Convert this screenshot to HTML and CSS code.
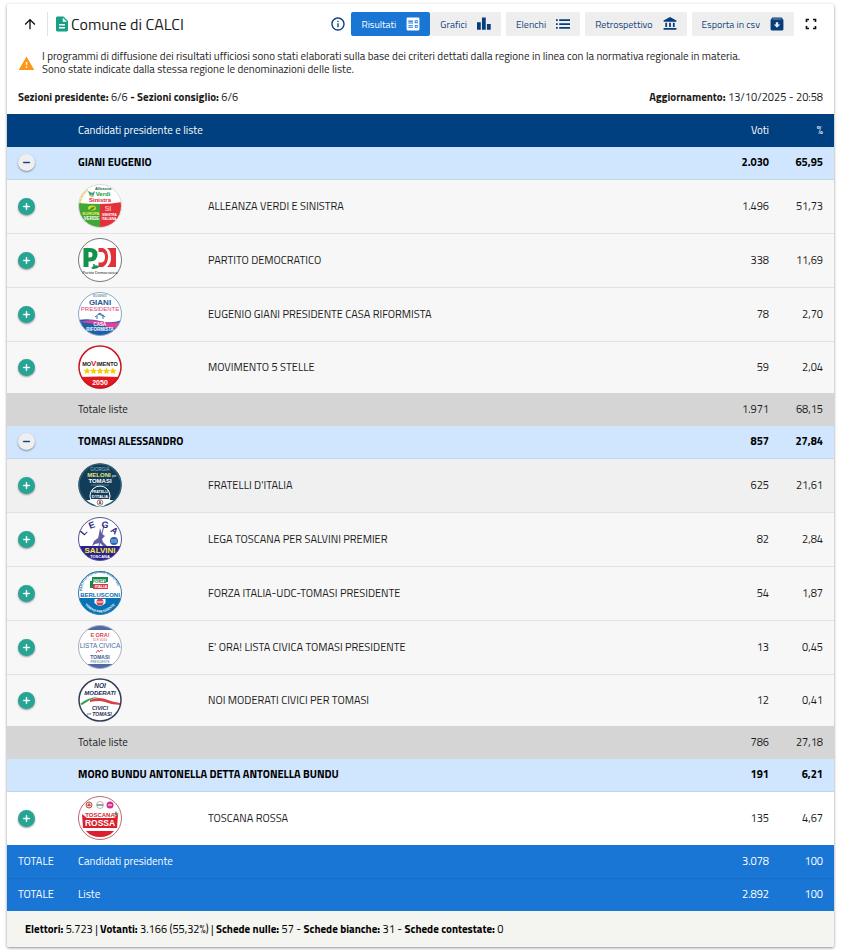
FILE: index.html
```html
<!DOCTYPE html>
<html lang="it">
<head>
<meta charset="utf-8">
<meta name="viewport" content="width=device-width, initial-scale=1">
<title>Comune di CALCI</title>
<link rel="stylesheet" href="styles.css">
</head>
<body>
<svg class="defs" aria-hidden="true">
  <symbol id="plus" viewBox="0 0 24 24"><path d="M19 13h-6v6h-2v-6H5v-2h6V5h2v6h6z"/></symbol>
  <symbol id="minus" viewBox="0 0 24 24"><path d="M19 13H5v-2h14z"/></symbol>
</svg>
<main class="card">
  <header class="toolbar">
    <button class="icon-btn up" aria-label="Livello superiore"><svg viewBox="0 0 24 24"><path d="M4 12l1.41 1.41L11 7.83V20h2V7.83l5.58 5.59L20 12l-8-8z"/></svg></button>
    <h1 class="title"><svg viewBox="0 0 24 24"><path d="M14 2H6c-1.100 0-2 .9-2 2v16c0 1.100.9 2 2 2h12c1.100 0 2-.9 2-2V8zm2 16H8v-2h8zm0-4H8v-2h8zm-3-5V3.500L18.500 9z"/></svg><span>Comune di CALCI</span></h1>
    <nav class="actions">
      <button class="icon-btn info" aria-label="Informazioni"><svg viewBox="0 0 24 24"><path d="M11 7h2v2h-2zm0 4h2v6h-2zm1-9C6.480 2 2 6.480 2 12s4.480 10 10 10 10-4.480 10-10S17.520 2 12 2zm0 18c-4.410 0-8-3.590-8-8s3.590-8 8-8 8 3.590 8 8-3.590 8-8 8z"/></svg></button>
      <div class="pair">
        <button class="btn active">Risultati <svg viewBox="0 0 24 24"><path fill-rule="evenodd" d="M3 1h18a2 2 0 0 1 2 2v18a2 2 0 0 1-2 2H3a2 2 0 0 1-2-2V3a2 2 0 0 1 2-2zM4 6v2h8V6zm0 3.500v1.500h8V9.500zM4 14v2h8v-2zm0 3.500V19h8v-1.500zM15 5.500v5h5v-5zm0 8v5h5v-5zM16.500 7h2v2h-2zm0 8h2v2h-2z"/></svg></button>
        <button class="btn">Grafici <svg viewBox="0 0 24 24"><path d="M0 9h6.500v13H0zM8.500 1H15v21H8.500zM17 12h6.500v10H17z"/></svg></button>
      </div>
      <button class="btn">Elenchi <svg viewBox="0 0 24 24"><path d="M0 4h3v3H0zm0 6.500h3v3H0zM0 17h3v3H0zM5.500 4H24v3H5.500zm0 6.500H24v3H5.500zm0 6.500H24v3H5.500z"/></svg></button>
      <button class="btn">Retrospettivo <svg viewBox="0 0 24 24"><path d="M4 10v7h3v-7zm6.500 0v7h3v-7zM1 22h22v-3H1zm16-12v7h3v-7zM12 0L1 6v2h22V6z"/></svg></button>
      <button class="btn">Esporta in csv <svg viewBox="0 0 24 24"><path fill-rule="evenodd" d="M4 1h16l3 4v16a2 2 0 0 1-2 2H3a2 2 0 0 1-2-2V5zM4 4h16l-1-1H5zM10 9v4H6.500l5.500 5.500 5.500-5.500H14V9z"/></svg></button>
      <button class="icon-btn full" aria-label="Schermo intero"><svg viewBox="0 0 24 24"><path d="M4 15h2.500v2.500H9V20H4zM4 4h5v2.500H6.500V9H4zm13.500 13.500V15H20v5h-5v-2.500zM15 4h5v5h-2.500V6.500H15z"/></svg></button>
    </nav>
  </header>

  <section class="notice">
    <svg viewBox="0 0 24 24"><path d="M1 21h22L12 2zm12-3h-2v-2h2zm0-4h-2v-4h2z"/></svg>
    <p>I programmi di diffusione dei risultati ufficiosi sono stati elaborati sulla base dei criteri dettati dalla regione in linea con la normativa regionale in materia.<br>Sono state indicate dalla stessa regione le denominazioni delle liste.</p>
  </section>

  <section class="status">
    <span><b>Sezioni presidente:</b> 6/6 <b>- Sezioni consiglio:</b> 6/6</span>
    <span><b>Aggiornamento:</b> 13/10/2025 - 20:58</span>
  </section>

  <table class="results">
    <colgroup><col class="c-toggle"><col class="c-logo"><col><col class="c-votes"><col class="c-pct"></colgroup>
    <thead>
      <tr><th></th><th colspan="2">Candidati presidente e liste</th><th class="num">Voti</th><th class="num">%</th></tr>
    </thead>
    <tbody>
      <tr class="candidate"><td><button class="toggle open" aria-label="Chiudi"><svg><use href="#minus"/></svg></button></td><td colspan="2">GIANI EUGENIO</td><td class="num">2.030</td><td class="num">65,95</td></tr>
      <tr class="party">
        <td><button class="toggle" aria-label="Apri"><svg><use href="#plus"/></svg></button></td>
        <td><svg class="logo" viewBox="0 0 44 44">
          <clipPath id="round"><circle cx="22" cy="22" r="21.500"/></clipPath>
          <g clip-path="url(#round)"><rect width="44" height="44" fill="#fff"/><path d="M0 19q10 1 22 1v24H0z" fill="#43a737"/><path d="M22 20q12 0 22-2v26H22z" fill="#e4303a"/></g>
          <circle cx="22" cy="22" r="21.500" fill="none" stroke="#d9dcd9"/>
          <path d="M2 19Q4 10 10 6" fill="none" stroke="#f5b335" stroke-width="1.500" stroke-dasharray="1 .6"/>
          <path d="M10 7l4 2 3-2-2 6-3-1z" fill="#2d9b9b"/><path d="M11 12l3-2 1 3z" fill="#f4c522"/>
          <text x="25" y="6" font-size="4" class="mark" fill="#176b3d">Alleanza</text>
          <text x="25" y="12" font-size="6" class="mark" fill="#129548">Verdi</text>
          <text x="22" y="18" font-size="6" class="mark" fill="#df252e">Sinistra</text>
          <ellipse cx="14" cy="24" rx="4" ry="2.500" fill="#d4df27"/><path d="M11 26q3-4 6-3-2 4-6 3" fill="#489535"/>
          <text x="13" y="31" font-size="4" class="mark" fill="#f6eb62">EUROPA</text><text x="13.500" y="36" font-size="4.500" class="mark" fill="#fff">VERDE</text>
          <text x="30" y="27" font-size="7" class="mark" fill="#ffb9b7">SI</text><text x="31.500" y="31.500" font-size="3.200" class="mark" fill="#fff">SINISTRA</text><text x="31" y="35.500" font-size="3.200" class="mark" fill="#fff">ITALIANA</text>
        </svg></td>
        <td>ALLEANZA VERDI E SINISTRA</td><td class="num">1.496</td><td class="num">51,73</td>
      </tr>
      <tr class="party">
        <td><button class="toggle" aria-label="Apri"><svg><use href="#plus"/></svg></button></td>
        <td><svg class="logo" viewBox="0 0 44 44">
          <circle cx="22" cy="22" r="21.500" fill="#fff" stroke="#777"/>
          <path fill-rule="evenodd" d="M5.500 10H12q7.500 0 7.500 6.500T12 23.500h-1.500V29h-5zm5 4v5.500H12q2.500 0 2.500-3T12 14z" fill="#12924a"/>
          <path fill-rule="evenodd" d="M20.500 10H25q5 2 5 9t-5 10h-4.500v-4.500H24q3-1 3-5.500t-3-5h-3.500z" fill="#e33138"/><path d="M29 10h9v19h-9q4-3 4-9.500T29 10z" fill="#e33138"/>
          <path d="M13 30q4-4 7-2 2-2 1 1-2 2-6 2z" fill="#12924a"/><circle cx="16" cy="27" r="1" fill="#12924a"/>
          <text x="22" y="36" font-size="4" text-anchor="middle" fill="#222">Partito Democratico</text>
        </svg></td>
        <td>PARTITO DEMOCRATICO</td><td class="num">338</td><td class="num">11,69</td>
      </tr>
      <tr class="party">
        <td><button class="toggle" aria-label="Apri"><svg><use href="#plus"/></svg></button></td>
        <td><svg class="logo" viewBox="0 0 44 44">
          <g clip-path="url(#round)"><rect width="44" height="44" fill="#fff"/><path d="M0 28q11-2 22 1t22-1v16H0z" fill="#1f5fa8"/><path d="M2 30q9-3 19-1 12 3 22 1-2 7-10 6-10-4-31-6z" fill="#e0419b"/></g>
          <circle cx="22" cy="22" r="21.500" fill="none" stroke="#87a9cb"/>
          <text x="22" y="5" font-size="3" class="mark" fill="#7896a8">EUGENIO</text>
          <text x="22" y="12.500" font-size="8" class="mark" fill="#215a91">GIANI</text>
          <text x="22" y="19" font-size="6" text-anchor="middle" fill="#dc3f80">PRESIDENTE</text>
          <path d="M17 25l5-4 5 4M19 24v3m6-3v3M20 22l6 2" fill="none" stroke="#3374b5"/>
          <text x="22" y="33.500" font-size="4.500" class="mark" fill="#fff">CASA</text><text x="22" y="38.500" font-size="4.500" class="mark" fill="#fff">RIFORMISTA</text>
        </svg></td>
        <td>EUGENIO GIANI PRESIDENTE CASA RIFORMISTA</td><td class="num">78</td><td class="num">2,70</td>
      </tr>
      <tr class="party closing">
        <td><button class="toggle" aria-label="Apri"><svg><use href="#plus"/></svg></button></td>
        <td><svg class="logo" viewBox="0 0 44 44">
          <g clip-path="url(#round)"><rect width="44" height="44" fill="#fff"/><path d="M0 32q22-1 44 0v12H0z" fill="#e11923"/></g>
          <circle cx="22" cy="22" r="21" fill="none" stroke="#c9151f" stroke-width="1.500"/>
          <text x="22" y="20.500" font-size="5.500" class="mark" fill="#161616">MO<tspan fill="#e11923" font-size="8">V</tspan>IMENTO</text>
          <path id="star" d="M9 22.500l1 2.300 2.500.2-1.900 1.600.6 2.400L9 27.700 6.800 29l.6-2.400L5.500 25l2.500-.2z" fill="#f8c900"/><use href="#star" x="6.500"/><use href="#star" x="13"/><use href="#star" x="19.500"/><use href="#star" x="26"/>
          <text x="22" y="40" font-size="7" class="mark" fill="#fff">2050</text>
        </svg></td>
        <td>MOVIMENTO 5 STELLE</td><td class="num">59</td><td class="num">2,04</td>
      </tr>
      <tr class="subtotal"><td></td><td colspan="2">Totale liste</td><td class="num">1.971</td><td class="num">68,15</td></tr>

      <tr class="candidate"><td><button class="toggle open" aria-label="Chiudi"><svg><use href="#minus"/></svg></button></td><td colspan="2">TOMASI ALESSANDRO</td><td class="num">857</td><td class="num">27,84</td></tr>
      <tr class="party hover">
        <td><button class="toggle" aria-label="Apri"><svg><use href="#plus"/></svg></button></td>
        <td><svg class="logo" viewBox="0 0 44 44">
          <g clip-path="url(#round)"><rect width="44" height="44" fill="#123c58"/><path d="M0 37h44v7H0z" fill="#fff"/></g>
          <circle cx="22" cy="22" r="21" fill="none" stroke="#315f78" stroke-width="1.500"/>
          <text x="22" y="8" font-size="4.500" text-anchor="middle" fill="#8dc3ca">GIORGIA</text>
          <text x="21" y="14" font-size="6" class="mark" fill="#ede77b">MELONI</text><text x="34" y="14" font-size="3" fill="#fff">per</text>
          <text x="22" y="20" font-size="6" class="mark" fill="#fff">TOMASI</text>
          <path d="M13 22h18" stroke="#678da0" stroke-width=".8"/>
          <circle cx="22" cy="33" r="10" fill="#123c58" stroke="#fff"/><path d="M12.500 36h19q-2 7-9.500 7.500-7.500-.5-9.500-7.500" fill="#fff"/>
          <text x="22" y="29.500" font-size="3.500" class="mark" fill="#fff">FRATELLI</text><text x="22" y="34.500" font-size="4" class="mark" fill="#fff">D'ITALIA</text>
          <circle cx="22" cy="39.500" r="2.800" fill="#fff" stroke="#567" stroke-width=".8"/><path d="M20.500 41q1-4 1.500-4t1.500 4z" fill="#c94d38"/>
        </svg></td>
        <td>FRATELLI D'ITALIA</td><td class="num">625</td><td class="num">21,61</td>
      </tr>
      <tr class="party">
        <td><button class="toggle" aria-label="Apri"><svg><use href="#plus"/></svg></button></td>
        <td><svg class="logo" viewBox="0 0 44 44">
          <g clip-path="url(#round)"><rect width="44" height="44" fill="#fff"/><path d="M0 29h44v15H0z" fill="#29248b"/></g>
          <circle cx="22" cy="22" r="21.500" fill="none" stroke="#56539a"/>
          <path d="M22 11l2 6 3 2-3 3 1 3 4 4h-4l-3-3-5 1-3 2 2-5 4-3 1-4z" fill="#6460a6"/><path d="M26 8l-5 21" stroke="#5d569f"/>
          <g font-size="9" class="bold" fill="#27257d"><text transform="translate(6 19) rotate(-48)">L</text><text transform="translate(12 12) rotate(-20)">E</text><text transform="translate(23 10) rotate(12)">G</text><text transform="translate(32 14) rotate(38)">A</text></g>
          <circle cx="36" cy="24" r="4" fill="#2360ad"/><path d="M33 23h6m-6 2h6" stroke="#dceaff" stroke-width=".7"/>
          <text x="22" y="36" font-size="8" class="mark" fill="#ffed37">SALVINI</text><text x="22" y="41" font-size="4" class="mark" fill="#fff">TOSCANA</text>
        </svg></td>
        <td>LEGA TOSCANA PER SALVINI PREMIER</td><td class="num">82</td><td class="num">2,84</td>
      </tr>
      <tr class="party">
        <td><button class="toggle" aria-label="Apri"><svg><use href="#plus"/></svg></button></td>
        <td><svg class="logo" viewBox="0 0 44 44">
          <g clip-path="url(#round)"><rect width="44" height="44" fill="#fff"/><path d="M0 27h44v17H0z" fill="#0872b5"/></g>
          <circle cx="22" cy="22" r="21.500" fill="none" stroke="#2c7daf"/>
          <path id="forza-top" d="M4 20A18 18 0 0 1 40 20" fill="none"/><text font-size="3.300" fill="#156e9f" class="bold"><textPath href="#forza-top">PARTITO POPOLARE EUROPEO</textPath></text>
          <path d="M14 6h16v5H14zM12 10h7v7h-7z" fill="#168b48"/><path d="M15 13h15v5H15z" fill="#d93843"/><path d="M15 8.500h13V13H15z" fill="#fff"/>
          <text x="21.500" y="12.200" font-size="4" class="mark" fill="#18804d">FORZA</text><text x="23" y="17" font-size="4" class="mark" fill="#fff">ITALIA</text>
          <text x="22" y="25.500" font-size="6" class="mark" fill="#086eaf">BERLUSCONI</text>
          <path d="M16.500 28h11v4q-5.500 6-11 0z" fill="#fff"/><circle cx="22" cy="31" r="3.500" fill="#d94252"/><path d="M19 31h6" stroke="#fff"/>
          <path id="forza-bottom" d="M4 31Q22 52 40 31" fill="none"/><text font-size="3.300" fill="#fff" class="bold"><textPath href="#forza-bottom" startOffset="4">TOMASI PRESIDENTE</textPath></text>
        </svg></td>
        <td>FORZA ITALIA-UDC-TOMASI PRESIDENTE</td><td class="num">54</td><td class="num">1,87</td>
      </tr>
      <tr class="party">
        <td><button class="toggle" aria-label="Apri"><svg><use href="#plus"/></svg></button></td>
        <td><svg class="logo" viewBox="0 0 44 44">
          <g clip-path="url(#round)"><rect width="44" height="44" fill="#fff"/><path d="M0 0h44v5H0zM0 39h44v5H0z" fill="#4d69a6"/></g>
          <circle cx="22" cy="22" r="21.500" fill="none" stroke="#a6b0bf"/>
          <text x="22" y="11.500" font-size="5.500" class="mark" fill="#d8434f">E ORA!</text><text x="22" y="15.500" font-size="3" text-anchor="middle" fill="#d8434f">11 E 15/10</text>
          <text x="22" y="23" font-size="6.500" text-anchor="middle" fill="#496ba0">LISTA CIVICA</text>
          <path d="M18 28l2-3 1 2 2-2 2 1" fill="none" stroke="#d8434f" stroke-width=".8"/>
          <text x="22" y="34" font-size="5" class="mark" fill="#365c91">TOMASI</text><text x="22" y="38" font-size="3" text-anchor="middle" fill="#5679ab">PRESIDENTE</text>
        </svg></td>
        <td>E' ORA! LISTA CIVICA TOMASI PRESIDENTE</td><td class="num">13</td><td class="num">0,45</td>
      </tr>
      <tr class="party closing">
        <td><button class="toggle" aria-label="Apri"><svg><use href="#plus"/></svg></button></td>
        <td><svg class="logo" viewBox="0 0 44 44">
          <circle cx="22" cy="22" r="21" fill="#fff" stroke="#343f56" stroke-width="1.500"/>
          <text x="22" y="10" font-size="6.500" class="mark slant" fill="#1c2b53">NOI</text><text x="22" y="17" font-size="6" class="mark slant" fill="#1c2b53">MODERATI</text>
          <path d="M2 26q8-7 19-7-5 1-9 3-5 3-8 5z" fill="#3a9d58"/><path d="M12 22q9-4 18 0 5 2 12 3v2q-8 0-15-3-6-2-15 0z" fill="#d94045"/>
          <text x="22" y="32" font-size="5.500" class="mark slant" fill="#1c2b53">CIVICI</text><text x="24" y="38" font-size="5" class="mark slant" fill="#1c2b53">TOMASI</text><text x="9" y="37" font-size="3" class="slant" fill="#1c2b53">per</text>
        </svg></td>
        <td>NOI MODERATI CIVICI PER TOMASI</td><td class="num">12</td><td class="num">0,41</td>
      </tr>
      <tr class="subtotal"><td></td><td colspan="2">Totale liste</td><td class="num">786</td><td class="num">27,18</td></tr>

      <tr class="candidate"><td></td><td colspan="2">MORO BUNDU ANTONELLA DETTA ANTONELLA BUNDU</td><td class="num">191</td><td class="num">6,21</td></tr>
      <tr class="party single">
        <td><button class="toggle" aria-label="Apri"><svg><use href="#plus"/></svg></button></td>
        <td><svg class="logo" viewBox="0 0 44 44">
          <circle cx="22" cy="22" r="21.500" fill="#fff" stroke="#b96a70"/>
          <circle cx="11" cy="9" r="3" fill="#f4d4b5" stroke="#b65352"/><path d="M9 10l2-3 2 3z" fill="#c2514d"/><circle cx="22" cy="9" r="3.500" fill="#fff" stroke="#999" stroke-width=".7"/><path d="M19 9h6" stroke="#444"/><circle cx="32" cy="9" r="3.500" fill="#d92d8a"/><path d="M30 9h4" stroke="#fff"/>
          <path d="M4 18l5 4h26l5-4-1 14H5z" fill="#db1f2e"/><path d="M8 35h28q-5 6-14 6T8 35z" fill="#db1f2e"/>
          <text x="22" y="20.500" font-size="6" class="mark plate" fill="#db1f2e">TOSCANA</text><text x="22" y="29.500" font-size="8.500" class="mark" fill="#fff">ROSSA</text>
          <path d="M38 15l1 2h2l-2 1 1 2-2-1-2 1 1-2-2-1h2z" fill="#75785a"/>
        </svg></td>
        <td>TOSCANA ROSSA</td><td class="num">135</td><td class="num">4,67</td>
      </tr>
    </tbody>
    <tfoot>
      <tr><td>TOTALE</td><td colspan="2">Candidati presidente</td><td class="num">3.078</td><td class="num">100</td></tr>
      <tr><td>TOTALE</td><td colspan="2">Liste</td><td class="num">2.892</td><td class="num">100</td></tr>
    </tfoot>
  </table>
  <footer class="summary"><b>Elettori:</b> 5.723 | <b>Votanti:</b> 3.166 (55,32%) | <b>Schede nulle:</b> 57 - <b>Schede bianche:</b> 31 - <b>Schede contestate:</b> 0</footer>
</main>
</body>
</html>
```
FILE: styles.css
```css
* { box-sizing: border-box; }
body {
  margin: 0;
  padding: 4px 16px 4px 7px;
  background: #fff;
  color: #1b1b1b;
  font: 11px/13px "Titillium Web", Roboto, sans-serif;
}
button { border: 0; font: inherit; cursor: pointer; }
.defs { position: absolute; width: 0; height: 0; }
.card { background: #fff; border-radius: 2px; box-shadow: 0 1px 3px rgba(0, 0, 0, .45); }

.toolbar { display: flex; align-items: center; gap: 5px; height: 40px; padding: 0 11px; }
.icon-btn { display: flex; padding: 0; background: none; }
.icon-btn svg { width: 16px; height: 16px; fill: #111; }
.up { padding: 4px 9px 4px 4px; border-right: 1px solid #e2e2e2; }
.title { display: flex; align-items: center; margin: 0; font-size: 16px; line-height: 24px; font-weight: 400; white-space: nowrap; }
.title svg { width: 18px; height: 18px; fill: #17a086; }
.actions { display: flex; align-items: center; gap: 5px; margin-left: auto; }
.info svg { fill: #063d7c; }
.full { padding: 0 4px; }
.pair { display: flex; }
.btn { display: flex; align-items: center; gap: 10px; height: 24px; padding: 0 10px; border-radius: 2px; background: #eee; color: #17457d; font-size: 10px; white-space: nowrap; }
.btn svg { width: 14px; height: 14px; fill: #063d7c; }
.btn.active { background: #1976d5; color: #fff; }
.btn.active svg { fill: #fff; }

.notice { display: flex; align-items: center; gap: 7px; padding: 6px 11px; }
.notice svg { width: 17px; height: 17px; fill: #ff9514; }
.notice p { margin: 0; }
.status { display: flex; justify-content: space-between; padding: 9px 11px 10px; }

.results { width: 100%; border-collapse: collapse; table-layout: fixed; }
.c-toggle { width: 60px; }
.c-logo { width: 130px; }
.c-votes { width: 64px; }
.c-pct { width: 54px; }
td, th { height: 33px; padding: 0 11px; text-align: left; font-weight: 400; }
.num { padding-left: 0; text-align: right; }
thead { background: #004080; color: #fff; }
.candidate { background: #d0e6fe; color: #000; }
.candidate td { height: 32px; font-weight: 700; border-bottom: 1px solid #c2d6ea; }
.party { background: #f7f7f7; }
.party td { height: 54px; border-bottom: 1px solid #e1e1e1; }
.party.closing td { height: 52px; border-bottom: 0; }
.party.hover { background: #f0f0f0; }
.party.single { background: #fff; }
.party.single td { border-bottom: 0; }
.subtotal { background: #d5d5d5; }
tfoot { background: #1976d5; color: #fff; }
tfoot tr + tr td { border-top: 1px solid #176dc6; }

.toggle { display: flex; align-items: center; justify-content: center; width: 17px; height: 17px; padding: 0; border-radius: 50%; background: #26a594; box-shadow: 0 1px 2px rgba(0, 0, 0, .4); }
.toggle svg { width: 11px; height: 11px; fill: #fff; stroke: #fff; }
.toggle.open { background: #efefef; }
.toggle.open svg { fill: #063d7c; stroke: #063d7c; }

.logo { display: block; width: 44px; height: 44px; font-family: "Liberation Sans", sans-serif; }
.mark { font-weight: 700; text-anchor: middle; }
.bold { font-weight: 700; }
.slant { font-style: italic; }
.plate { paint-order: stroke; stroke: #fff; stroke-width: 1px; }

.summary { padding: 12px 18px 11px; background: #f4f4f0; color: #000; border-radius: 0 0 2px 2px; }
```
